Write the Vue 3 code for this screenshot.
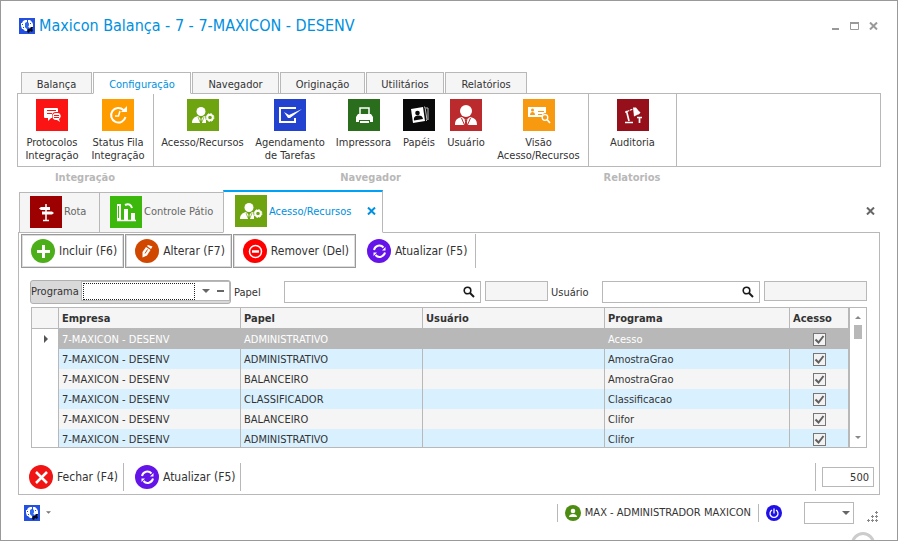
<script setup>
import { ref } from 'vue'

const ribbonTabs = ['Balança', 'Configuração', 'Navegador', 'Originação', 'Utilitários', 'Relatórios']
const activeRibbon = ref('Configuração')

const groups = [
  {
    name: 'Integração',
    kind: 'integration',
    items: [
      { icon: 'chat', tone: 'red', lines: ['Protocolos', 'Integração'] },
      { icon: 'clock', tone: 'orange', lines: ['Status Fila', 'Integração'] },
    ],
  },
  {
    name: 'Navegador',
    kind: 'browser',
    items: [
      { icon: 'access', tone: 'olive', lines: ['Acesso/Recursos'] },
      { icon: 'check', tone: 'blue', lines: ['Agendamento', 'de Tarefas'] },
      { icon: 'printer', tone: 'forest', lines: ['Impressora'] },
      { icon: 'papers', tone: 'black', lines: ['Papéis'] },
      { icon: 'user', tone: 'crimson', lines: ['Usuário'] },
      { icon: 'card', tone: 'amber', lines: ['Visão', 'Acesso/Recursos'] },
    ],
  },
  {
    name: 'Relatorios',
    kind: 'reports',
    items: [{ icon: 'audit', tone: 'wine', lines: ['Auditoria'] }],
  },
]

const actions = [
  { icon: 'plus', tone: 'green', label: 'Incluir (F6)' },
  { icon: 'pencil', tone: 'rust', label: 'Alterar (F7)' },
  { icon: 'minus', tone: 'bright', label: 'Remover (Del)' },
]

const empresa = '7-MAXICON - DESENV'
const rows = ref([
  { papel: 'ADMINISTRATIVO', programa: 'Acesso', acesso: true },
  { papel: 'ADMINISTRATIVO', programa: 'AmostraGrao', acesso: true },
  { papel: 'BALANCEIRO', programa: 'AmostraGrao', acesso: true },
  { papel: 'CLASSIFICADOR', programa: 'Classificacao', acesso: true },
  { papel: 'BALANCEIRO', programa: 'Clifor', acesso: true },
  { papel: 'ADMINISTRATIVO', programa: 'Clifor', acesso: true },
])
const limit = ref('500')
</script>

<template>
  <svg class="sprite" aria-hidden="true">
    <symbol id="logo" viewBox="0 0 16 16">
      <rect width="16" height="16" fill="#2450e0" />
      <path d="M6 2h2v2L6 5v4l2 2v2H6L4 11H3L2 8V5h1l1-2ZM9 2h2l2 2 1 2v3h-2l-1 1-2-1 1-3-1-2Z" fill="#fff" />
      <path d="M6 5h3l1 2-1 2 0 2-2-1-1-2Z" fill="#2f6bf0" />
      <path d="M3 6h1v1H3ZM4 9h1v1H4ZM11 5h1v1h-1Z" fill="#2450e0" />
      <path d="m8 14 1-3 2 0 1-2h2l-1 2 1 1-1 2-2-1-1 2Z" fill="#0a0a14" />
    </symbol>
    <symbol id="chat" viewBox="0 0 32 32">
      <path d="M9 9h12a1 1 0 0 1 1 1v3h-2a4 4 0 0 0-4 4v2h-1l-3 3v-3H9a1 1 0 0 1-1-1v-8a1 1 0 0 1 1-1Z" fill="#fff" />
      <path d="M11 11.500h9M11 14.500h5" stroke="#fb1414" stroke-width="1" />
      <path d="M20 14h2a3 3 0 0 1 2 5l-1 1 1 3-3-2h-1a3 3 0 0 1 0-7Z" fill="#fff" />
      <path d="M18 16.500h5M18 18.500h5" stroke="#fb1414" stroke-width="1" />
    </symbol>
    <symbol id="clock" viewBox="0 0 32 32">
      <path d="M21.500 11a7.300 7.300 0 1 0 2 7" fill="none" stroke="#fff" stroke-width="2" />
      <path d="M19 13h6V7Z" fill="#fff" />
      <path d="m18 12-1.500 5H13" fill="none" stroke="#fff" stroke-width="1.500" />
    </symbol>
    <symbol id="access" viewBox="0 0 32 32">
      <circle cx="14" cy="12.500" r="4.500" fill="#fff" />
      <path d="M5 24c0-4 2-6 6-7l2 2h2l2-2 2 1v6Z" fill="#fff" />
      <path d="m14 18-1 1 .500 1-.700 4h2.400l-.700-4 .500-1Z" fill="#6da410" />
      <path d="m11 18 2 5M17 18l-2 5" stroke="#6da410" stroke-width=".700" />
      <circle cx="23" cy="18.500" r="4.700" fill="#6da410" />
      <circle cx="23" cy="18.500" r="2.800" fill="none" stroke="#fff" stroke-width="2" />
      <circle cx="23" cy="18.500" r="3.900" fill="none" stroke="#fff" stroke-width="1" stroke-dasharray="1.600 1.460" />
    </symbol>
    <symbol id="check" viewBox="0 0 32 32">
      <path d="M21 10V9H6v14h15v-4" fill="none" stroke="#fff" stroke-width="2" />
      <path d="m10 13 5 3 13-6-12 9h-2Z" fill="#fff" />
    </symbol>
    <symbol id="printer" viewBox="0 0 32 32">
      <path d="M12 15V9h9v6" fill="none" stroke="#fff" stroke-width="1.500" />
      <path d="M10 15h13l2 3v5h-3v-2H11v2H8v-5Z" fill="#fff" />
      <path d="M12 22h9v2h-9Z" fill="#fff" />
    </symbol>
    <symbol id="papers" viewBox="0 0 32 32">
      <path d="m8 10 12-2 2 14-12 2Z" fill="#fff" />
      <path d="m21 8 1 0 2 13-1 1M23 9l2 0 0 12" fill="none" stroke="#bbb" stroke-width="1" />
      <circle cx="14.500" cy="14" r="2.300" fill="#0a0a0a" />
      <path d="M11 21.500c-.500-3.500 1-4.500 3.500-5 3-.500 5 .500 5.500 3.500Z" fill="#0a0a0a" />
    </symbol>
    <symbol id="user" viewBox="0 0 32 32">
      <ellipse cx="16" cy="12" rx="6" ry="6" fill="#fff" />
      <path d="M5 26c0-5 2-7 7-8l4 3 4-3c5 1 7 3 7 8Z" fill="#fff" />
      <path d="m11.500 19 3 7M20.500 19l-3 7" stroke="#bb2a2c" stroke-width="1" />
      <path d="m15 20 1 1 1-1 .500 1-.700 1 .700 4h-3l.700-4-.700-1Z" fill="#bb2a2c" />
    </symbol>
    <symbol id="card" viewBox="0 0 32 32">
      <path d="M5 8h18v6a4 4 0 0 0-4 4H5Z" fill="#fff" />
      <circle cx="9.500" cy="11" r="1.500" fill="#f79a10" />
      <path d="M7 16c0-4 5-4 5 0Z" fill="#f79a10" />
      <path d="M15 12.500h6M15 15.500h4" stroke="#f79a10" stroke-width="1" />
      <circle cx="22" cy="18.500" r="2.800" fill="none" stroke="#fff" stroke-width="1.300" />
      <path d="m24 20.500 3 3.500" stroke="#fff" stroke-width="1.700" />
    </symbol>
    <symbol id="audit" viewBox="0 0 32 32">
      <path d="M8 23.500h8" stroke="#fff" stroke-width="1.500" />
      <path d="m12 22-2-8" stroke="#fff" stroke-width="1.700" />
      <path d="m10 12.500 6-2.500" stroke="#fff" stroke-width="1.200" stroke-dasharray="2.500 .800" />
      <circle cx="9.500" cy="13" r="1.300" fill="#fff" />
      <path d="m16 8.500 3 0 4 5-1 1.500-5 2.500Z" fill="#fff" />
      <path d="M20 18.500h5M22.500 18v6" stroke="#fff" stroke-width="1.700" />
      <path d="m21 15 2-2" stroke="#fff" stroke-width="1.500" />
    </symbol>
    <symbol id="signpost" viewBox="0 0 32 32">
      <path d="M16 8v16M13 24.500h6" stroke="#fff" stroke-width="1.500" />
      <path d="m9 12.500 2-1.500h9v3h-9ZM12 15.500h10l2 1.500-2 1.500H12Z" fill="#fff" />
    </symbol>
    <symbol id="chart" viewBox="0 0 32 32">
      <path d="M7 24.500h19" stroke="#fff" stroke-width="1.500" />
      <path d="M7 8h4v16H7ZM14 13h4v11h-4ZM21 17h4v7h-4Z" fill="#fff" />
      <path d="M15 9c4-2 6 0 7 3" fill="none" stroke="#fff" stroke-width="2" />
      <path d="M8.500 10v12" stroke="#3cb80c" stroke-width="1" />
    </symbol>
    <symbol id="plus" viewBox="0 0 24 24">
      <path d="M12.500 6v13M6 12.500h13" stroke="#fff" stroke-width="3" />
    </symbol>
    <symbol id="pencil" viewBox="0 0 24 24">
      <path d="m7.500 13 3.500-5 4.500 3-3.500 5.500-4.500 2Z" fill="#fff" />
      <path d="m10 14.500 2.500-4" stroke="#d04800" stroke-width="1" />
      <path d="m12 7 1-1 4.500 1.500-1.500 2.500Z" fill="#fff" />
    </symbol>
    <symbol id="minus" viewBox="0 0 24 24">
      <circle cx="12.500" cy="12.500" r="6" fill="none" stroke="#fff" stroke-width="1.500" />
      <path d="M9 12.500h7" stroke="#fff" stroke-width="2.500" />
    </symbol>
    <symbol id="refresh" viewBox="0 0 24 24">
      <path d="M7 11a5.500 5.500 0 0 1 9.500-2.500M18 13.500A5.500 5.500 0 0 1 8.500 16" fill="none" stroke="#fff" stroke-width="2" />
      <path d="M18.500 8v3.500H15ZM6.500 17v-3.500H10Z" fill="#fff" />
    </symbol>
    <symbol id="cross" viewBox="0 0 24 24">
      <path d="m7 7 11 11M18 7 7 18" stroke="#fff" stroke-width="2.500" />
    </symbol>
    <symbol id="person" viewBox="0 0 16 16">
      <circle cx="8" cy="6" r="2.300" fill="#fff" />
      <path d="M4 12c0-4 8-4 8 0Z" fill="#fff" />
    </symbol>
    <symbol id="power" viewBox="0 0 16 16">
      <path d="M6 5a4 4 0 1 0 4 0M8 3.500v5" fill="none" stroke="#fff" stroke-width="1.300" />
    </symbol>
    <symbol id="close" viewBox="0 0 9 8">
      <path d="m1 .500 7 7M8 .500l-7 7" fill="none" stroke="currentColor" stroke-width="2" />
    </symbol>
    <symbol id="down" viewBox="0 0 8 4">
      <path d="M0 0h8L4 4Z" fill="currentColor" />
    </symbol>
    <symbol id="search" viewBox="0 0 12 12">
      <circle cx="4.500" cy="4.500" r="3.300" fill="none" stroke="#1a1a1a" stroke-width="1.600" />
      <path d="m7 7 4 4" stroke="#1a1a1a" stroke-width="2" />
    </symbol>
  </svg>

  <main class="window">
    <header class="titlebar">
      <svg class="logo"><use href="#logo" /></svg>
      <h1>Maxicon Balança - 7 - 7-MAXICON - DESENV</h1>
      <div class="window-buttons">
        <button aria-label="Minimizar"><svg viewBox="0 0 10 8"><path d="M1 7h7" stroke="#999" stroke-width="2" /></svg></button>
        <button aria-label="Maximizar"><svg viewBox="0 0 10 8"><path d="M.500 1v6.500h8V1" fill="none" stroke="#999" /><path d="M0 1h9" stroke="#999" stroke-width="2" /></svg></button>
        <button aria-label="Fechar janela"><svg viewBox="0 0 10 8"><path d="m1 .500 7 7M8 .500l-7 7" stroke="#999" stroke-width="2" /></svg></button>
      </div>
    </header>

    <nav class="ribbon-tabs">
      <button
        v-for="tab in ribbonTabs"
        :key="tab"
        :class="{ active: tab === activeRibbon }"
        @click="activeRibbon = tab"
      >{{ tab }}</button>
    </nav>

    <section class="ribbon">
      <div v-for="group in groups" :key="group.name" class="group" :class="group.kind">
        <button v-for="item in group.items" :key="item.icon" class="tool">
          <svg class="tile" :class="item.tone"><use :href="'#' + item.icon" /></svg>
          <span v-for="line in item.lines" :key="line">{{ line }}</span>
        </button>
      </div>
    </section>
    <div class="captions">
      <span v-for="group in groups" :key="group.name">{{ group.name }}</span>
    </div>

    <nav class="doc-tabs">
      <button class="doc-tab route"><svg class="tile maroon"><use href="#signpost" /></svg>Rota</button>
      <button class="doc-tab yard"><svg class="tile lime"><use href="#chart" /></svg>Controle Pátio</button>
      <div class="doc-tab current">
        <svg class="tile olive"><use href="#access" /></svg>
        <span>Acesso/Recursos</span>
        <button class="x" aria-label="Fechar aba"><svg><use href="#close" /></svg></button>
      </div>
      <button class="x x-all" aria-label="Fechar documento"><svg><use href="#close" /></svg></button>
    </nav>

    <section class="document">
      <div class="toolbar">
        <button v-for="action in actions" :key="action.icon" class="action boxed">
          <svg class="round" :class="action.tone"><use :href="'#' + action.icon" /></svg>{{ action.label }}
        </button>
        <button class="action plain divided">
          <svg class="round violet"><use href="#refresh" /></svg>Atualizar (F5)
        </button>
      </div>

      <form class="filters" @submit.prevent>
        <div class="program">
          <label for="programa">Programa</label>
          <div class="program-field">
            <select id="programa"><option></option></select>
            <svg class="arrow"><use href="#down" /></svg>
            <button type="button" class="clear" aria-label="Limpar"></button>
          </div>
        </div>
        <label for="papel">Papel</label>
        <div class="lookup role">
          <input id="papel" type="text">
          <button type="button" aria-label="Pesquisar papel"><svg><use href="#search" /></svg></button>
        </div>
        <input class="readonly short" type="text" aria-label="Descrição do papel" disabled>
        <label for="usuario">Usuário</label>
        <div class="lookup person">
          <input id="usuario" type="text">
          <button type="button" aria-label="Pesquisar usuário"><svg><use href="#search" /></svg></button>
        </div>
        <input class="readonly long" type="text" aria-label="Nome do usuário" disabled>
      </form>

      <div class="grid">
        <div class="grid-view">
          <table>
            <colgroup>
              <col class="c-mark"><col class="c-text"><col class="c-text"><col class="c-text"><col><col class="c-access">
            </colgroup>
            <thead>
              <tr>
                <th></th><th>Empresa</th><th>Papel</th><th>Usuário</th><th>Programa</th><th>Acesso</th>
              </tr>
            </thead>
            <tbody>
              <tr v-for="(row, i) in rows" :key="i" :class="{ selected: i === 0 }">
                <td class="mark"><svg v-if="i === 0" viewBox="0 0 4 8"><path d="M0 0v8l4-4Z" fill="#555" /></svg></td>
                <td>{{ empresa }}</td>
                <td>{{ row.papel }}</td>
                <td></td>
                <td>{{ row.programa }}</td>
                <td class="access">
                  <label class="tick">
                    <input v-model="row.acesso" type="checkbox" :aria-label="'Acesso ' + row.programa">
                    <svg v-if="row.acesso" viewBox="0 0 13 13"><path d="m2.500 6.500 3 3 5-6.500" fill="none" stroke="#606060" stroke-width="2" /></svg>
                  </label>
                </td>
              </tr>
            </tbody>
          </table>
        </div>
        <div class="scrollbar">
          <svg class="up" viewBox="0 0 8 4"><path d="M1 4h6L4 1Z" fill="#888" /></svg>
          <div class="thumb"></div>
          <svg class="end" viewBox="0 0 8 4"><path d="M1 0h6L4 3Z" fill="#888" /></svg>
        </div>
      </div>

      <footer class="doc-footer">
        <button class="action divided"><svg class="round scarlet"><use href="#cross" /></svg>Fechar (F4)</button>
        <button class="action divided"><svg class="round violet"><use href="#refresh" /></svg>Atualizar (F5)</button>
        <div class="limit"><input v-model="limit" type="text" aria-label="Limite de registros"></div>
      </footer>
    </section>

    <footer class="status">
      <button class="app-menu" aria-label="Menu do aplicativo">
        <svg class="logo"><use href="#logo" /></svg>
        <svg class="tiny"><use href="#down" /></svg>
      </button>
      <div class="session">
        <svg class="dot moss"><use href="#person" /></svg>
        <span>MAX - ADMINISTRADOR MAXICON</span>
      </div>
      <button class="power" aria-label="Sair"><svg class="dot indigo"><use href="#power" /></svg></button>
      <div class="skin">
        <select aria-label="Tema"><option></option></select>
        <svg class="arrow"><use href="#down" /></svg>
      </div>
      <svg class="grip" viewBox="0 0 12 12">
        <path d="M9 1.500h3M9 5.500h3M9 9.500h3M5 5.500h3M5 9.500h3M1 9.500h3M10.500 0v3M10.500 4v3M10.500 8v3M6.500 4v3M6.500 8v3M2.500 8v3" stroke="#888" />
      </svg>
      <span class="ring"></span>
    </footer>
  </main>
</template>

<style>
body {
  background: #fff;
}
</style>

<style scoped>
.sprite {
  position: absolute;
  width: 0;
  height: 0;
}
.window {
  box-sizing: border-box;
  min-height: 100vh;
  border: 1px solid #999;
  padding: 0 16px;
  background: #fff;
  color: #333;
  font: 11px/13px "DejaVu Sans Condensed", "Noto Sans", sans-serif;
  position: relative;
  overflow: hidden;
}
.window * {
  box-sizing: border-box;
}
svg {
  display: block;
  flex: none;
}
button {
  font: inherit;
  color: inherit;
  background: none;
  border: 0;
  padding: 0;
  margin: 0;
}
input,
select {
  font: inherit;
  color: inherit;
  margin: 0;
  min-width: 0;
}
.logo {
  width: 16px;
  height: 16px;
}

.titlebar {
  height: 50px;
  display: flex;
  align-items: center;
  gap: 4px;
  padding: 0 2px;
}
h1 {
  margin: 0;
  flex: 1;
  font-size: 16px;
  line-height: 20px;
  font-weight: 400;
  color: #0090e0;
}
.window-buttons {
  display: flex;
  gap: 9px;
}
.window-buttons svg {
  width: 10px;
  height: 8px;
}

.ribbon-tabs {
  margin-top: 21px;
  padding-left: 4px;
  display: grid;
  grid-template-columns: 71px 98px 87px 85px 78px 82px;
  gap: 1px;
  height: 22px;
  position: relative;
  z-index: 1;
}
.ribbon-tabs button {
  border: 1px solid #b8b8b8;
  background: #f5f5f5;
  padding-top: 2px;
}
.ribbon-tabs .active {
  background: #fff;
  border-bottom-color: #fff;
  color: #0090e0;
}
.ribbon,
.captions {
  display: grid;
  grid-template-columns: 136px 435px 88px 1fr;
}
.ribbon {
  margin-top: -1px;
  border: 1px solid #b8b8b8;
  height: 74px;
}
.group {
  display: grid;
  border-right: 1px solid #b8b8b8;
  padding: 5px 1px 0;
}
.integration {
  grid-template-columns: 66px 66px;
}
.browser {
  grid-template-columns: 95px 80px 67px 44px 50px 95px;
}
.tool {
  display: flex;
  flex-direction: column;
  align-items: center;
  white-space: nowrap;
}
.tool .tile {
  margin-bottom: 5px;
}
.tile {
  width: 32px;
  height: 32px;
}
.captions {
  height: 23px;
  padding-top: 4px;
  font-weight: 700;
  color: #b8b8b8;
  text-align: center;
}

.red { background: #fb1414; }
.bright { background: #ff0000; }
.orange { background: #ff9c00; }
.olive { background: #6da410; }
.blue { background: #2242d0; }
.forest { background: #296d1d; }
.black { background: #0a0a0a; }
.crimson { background: #bb2a2c; }
.amber { background: #f79a10; }
.wine { background: #95101a; }
.maroon { background: #9c0000; }
.lime { background: #3cb80c; }
.green { background: #4caf1a; }
.rust { background: #d04800; }
.violet { background: #6414e8; }
.scarlet { background: #f01414; }
.moss { background: #4c8c10; }
.indigo { background: #2010e8; }

.doc-tabs {
  display: flex;
  align-items: flex-end;
  height: 43px;
  padding-left: 2px;
  position: relative;
  z-index: 1;
}
.doc-tab {
  display: flex;
  align-items: center;
  gap: 2px;
  height: 41px;
  padding: 0 0 2px 10px;
  border: 1px solid #b8b8b8;
  border-right: 0;
  background: #f5f5f5;
  color: #666;
  white-space: nowrap;
}
.route {
  width: 80px;
}
.yard {
  width: 124px;
}
.current {
  width: 160px;
  height: 43px;
  padding: 0 6px 2px 11px;
  border-top: 2px solid #00a2f8;
  border-right: 1px solid #b8b8b8;
  border-bottom-color: #fff;
  background: #fff;
  color: #0090e0;
}
.current span {
  flex: 1;
}
.x svg {
  width: 9px;
  height: 8px;
}
.x-all {
  margin: 0 6px 18px auto;
  color: #666;
}

.document {
  margin: -1px 1px 0;
  border: 1px solid #b8b8b8;
}
.toolbar {
  display: flex;
  padding: 1px 2px 0;
}
.action {
  display: flex;
  align-items: center;
  gap: 4px;
  height: 34px;
  font-size: 12px;
  line-height: 16px;
  white-space: nowrap;
}
.boxed {
  border: 1px solid #999;
  outline: 1px solid #ddd;
  outline-offset: -2px;
  padding: 0 6px 0 9px;
  margin-right: 1px;
}
.plain {
  margin-left: 10px;
}
.divided {
  border-right: 1px solid #b8b8b8;
  padding-right: 8px;
}
.round {
  width: 24px;
  height: 24px;
  border-radius: 50%;
}

.filters {
  display: flex;
  align-items: flex-start;
  margin-top: 12px;
  padding: 0 12px 0 11px;
}
.filters > label {
  padding: 6px 0 0 3px;
}
.program {
  display: flex;
  align-items: flex-start;
  width: 201px;
  height: 24px;
  border: 1px solid #b0b0b0;
  border-radius: 3px;
  background: #d9d9d9;
}
.program label {
  width: 50px;
  padding-top: 4px;
  white-space: nowrap;
}
.program-field {
  flex: 1;
  display: flex;
  align-items: center;
  gap: 7px;
  height: 20px;
  padding: 0 5px 0 1px;
  border: 1px solid #b8b8b8;
  background: #fff;
}
.program-field select {
  flex: 1;
  height: 17px;
  border: 1px dotted #222;
  border-radius: 0;
  background: #fff;
  appearance: none;
}
.arrow {
  width: 8px;
  height: 4px;
  color: #666;
}
.clear {
  width: 7px;
  height: 2px;
  background: #666;
}
.lookup {
  display: flex;
  align-items: center;
  height: 22px;
  margin-top: 1px;
  border: 1px solid #b8b8b8;
  background: #fff;
}
.lookup input {
  flex: 1;
  height: 18px;
  border: 0;
  outline: 0;
}
.lookup svg {
  width: 12px;
  height: 12px;
}
.lookup button {
  margin-right: 5px;
}
.role {
  flex: 198 1 0;
  margin-left: 23px;
}
.person {
  flex: 159 1 0;
  margin-left: 13px;
}
.readonly {
  height: 20px;
  margin: 1px 0 0 4px;
  padding: 0;
  border: 1px solid #b8b8b8;
  background: #f5f5f5;
}
.short {
  flex: 62 1 0;
}
.long {
  flex: 102 1 0;
}

.grid {
  display: flex;
  margin: 3px 12px 0;
  height: 141px;
  border: 1px solid #b8b8b8;
}
.grid-view {
  flex: 1;
  overflow: hidden;
  border-right: 2px solid #b8b8b8;
}
table {
  width: 100%;
  table-layout: fixed;
  border-collapse: separate;
  border-spacing: 0;
}
.c-mark {
  width: 27px;
}
.c-text {
  width: 182px;
}
.c-access {
  width: 58px;
}
th,
td {
  height: 20px;
  padding: 0 0 0 3px;
  text-align: left;
  white-space: nowrap;
  border-right: 1px solid #b8b8b8;
}
th:last-child,
td:last-child {
  border-right: 0;
}
th {
  height: 21px;
  background: #f5f5f5;
  border-bottom: 1px solid #b8b8b8;
}
td {
  background: #f5f5f5;
}
tr:nth-child(even) td {
  background: #d9f1ff;
}
tr.selected td {
  background: #b8b8b8;
  color: #fff;
}
tbody tr td.mark,
tbody tr:nth-child(even) td.mark {
  background: #fff;
  padding-left: 12px;
}
.mark svg {
  width: 4px;
  height: 8px;
}
td.access {
  padding: 0;
}
.tick {
  display: grid;
  width: 13px;
  height: 13px;
  margin: 0 auto;
}
.tick > * {
  grid-area: 1 / 1;
}
.tick input {
  appearance: none;
  width: 13px;
  height: 13px;
  border: 1px solid #777;
  background: #f2f2f2;
}
.tick svg {
  width: 13px;
  height: 13px;
  pointer-events: none;
}
.scrollbar {
  width: 16px;
  display: flex;
  flex-direction: column;
  align-items: center;
  padding: 7px 0;
}
.scrollbar svg {
  width: 8px;
  height: 4px;
}
.thumb {
  width: 8px;
  height: 14px;
  margin: 6px 0 auto;
  background: #b8b8b8;
}

.doc-footer {
  display: flex;
  align-items: center;
  padding: 15px 5px 3px 10px;
}
.doc-footer .action {
  height: 28px;
  padding-right: 5px;
  margin-right: 11px;
}
.limit {
  margin-left: auto;
  border-left: 1px solid #b8b8b8;
  padding: 4px 0 4px 6px;
}
.limit input {
  display: block;
  width: 52px;
  height: 20px;
  border: 1px solid #b8b8b8;
  padding: 0 4px;
  text-align: right;
}

.status {
  display: flex;
  align-items: center;
  height: 35px;
  padding: 0 3px 0 7px;
}
.app-menu {
  display: flex;
  align-items: center;
  gap: 6px;
  margin-right: auto;
}
.tiny {
  width: 5px;
  height: 3px;
  color: #777;
}
.session {
  display: flex;
  align-items: center;
  gap: 4px;
  height: 18px;
  padding: 0 7px;
  border: solid #b8b8b8;
  border-width: 0 1px;
}
.dot {
  width: 16px;
  height: 16px;
  border-radius: 50%;
}
.power {
  margin: 0 22px 0 7px;
}
.skin {
  display: grid;
  align-items: center;
  justify-items: end;
  width: 50px;
  height: 22px;
}
.skin > * {
  grid-area: 1 / 1;
}
.skin select {
  width: 100%;
  height: 22px;
  border: 1px solid #b8b8b8;
  border-radius: 0;
  background: #fff;
  appearance: none;
}
.skin .arrow {
  margin-right: 4px;
  pointer-events: none;
}
.grip {
  width: 12px;
  height: 12px;
  margin: 8px 0 0 12px;
}
.ring {
  position: absolute;
  right: 22px;
  bottom: -16px;
  width: 24px;
  height: 24px;
  border: 3px solid #ccc;
  border-radius: 50%;
}
</style>
